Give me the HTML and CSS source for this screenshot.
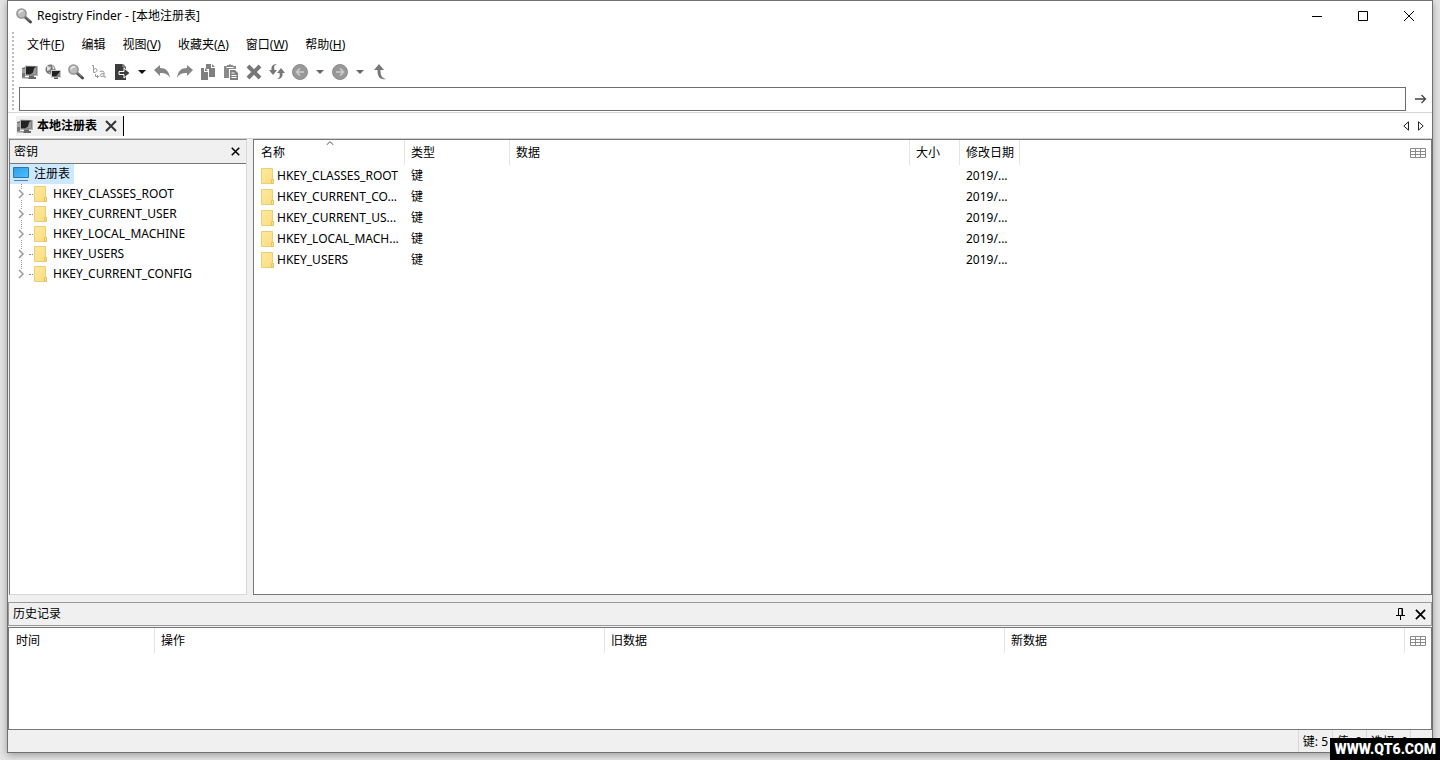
FILE: index.html
```html
<!DOCTYPE html>
<html lang="zh-CN">
<head>
<meta charset="utf-8">
<title>Registry Finder - [本地注册表]</title>
<link rel="stylesheet" href="styles.css">
</head>
<body>
<svg class="defs" aria-hidden="true">
  <defs>
    <linearGradient id="folder-fill" x1="0" y1="0" x2="1" y2="1"><stop offset="0" stop-color="#ffe9a0"/><stop offset="1" stop-color="#f9dc7c"/></linearGradient>
    <linearGradient id="screen-fill" x1="0" y1="0" x2="1" y2="1"><stop offset="0" stop-color="#2f9bea"/><stop offset="1" stop-color="#4fc0fb"/></linearGradient>
    <linearGradient id="mono-fill" x1="0" y1="0" x2="1" y2="1"><stop offset="0" stop-color="#111"/><stop offset=".5" stop-color="#333"/><stop offset="1" stop-color="#999"/></linearGradient>
    <symbol id="i-folder" viewBox="0 0 14 16"><path d="M.5.5h11v11h1v4H.5z" fill="url(#folder-fill)" stroke="#e9cf78"/><path d="M10.500 15.500v-4h2v4z" fill="#fbe08a" stroke="#e3c565"/></symbol>
    <symbol id="i-pc" viewBox="0 0 16 16"><path d="M0 4l3-1v11H0z" fill="#777"/><path d="M0 6h3M0 8h3" stroke="#ccc"/><path d="M3 1.500l13 .5v10H3z" fill="#b5b5b5"/><path d="M4 2.500h10.500v8H4z" fill="#222"/><path d="M8 10.500l3-2 1-4 2.500-2v8z" fill="#999"/><path d="M7 11.500h5v1.500h2v2H6v-2h1z" fill="#666"/><path d="M0 13h7v1.500H0z" fill="#999"/></symbol>
    <symbol id="i-lens" viewBox="0 0 16 16"><path d="M9 9l5.500 5" stroke="#444" stroke-width="2.800" stroke-linecap="round"/><path d="M9 8.500l4.500 4.200" stroke="#999"/><circle cx="5.500" cy="5.500" r="4.600" fill="#bcbcbc" stroke="#8d8d8d" stroke-width="1.400"/><path d="M3 5.500A3 3 0 0 1 7 3" stroke="#eee" stroke-width="1.500" fill="none"/></symbol>
    <symbol id="i-caret" viewBox="0 0 8 4"><path d="M0 0h8L4 4z" fill="currentColor"/></symbol>
    <symbol id="i-x" viewBox="0 0 12 12"><path d="M1 1l10 10M11 1L1 11" fill="none" stroke="currentColor"/></symbol>
    <symbol id="i-grid" viewBox="0 0 16 10"><path d="M.5.5h15v9H.5zM.5 3.500h15M.5 6.500h15M5.500.5v9M10.500.5v9" fill="none" stroke="#8a8a8a"/></symbol>
    <symbol id="i-expand" viewBox="0 0 6 10"><path d="M1 1l4 4-4 4" fill="none" stroke="#999" stroke-width="1.500"/></symbol>
  </defs>
</svg>
<div class="window">
  <header class="titlebar">
    <svg class="icon"><use href="#i-lens"/></svg>
    <h1 class="title">Registry Finder - [本地注册表]</h1>
    <button class="caption" aria-label="最小化"><svg width="10" height="10"><path d="M0 5.500h10" stroke="#000"/></svg></button>
    <button class="caption" aria-label="最大化"><svg width="10" height="10"><path d="M.5.5h9v9h-9z" stroke="#000" fill="none"/></svg></button>
    <button class="caption" aria-label="关闭"><svg width="12" height="12"><use href="#i-x"/></svg></button>
  </header>

  <div class="rebar">
    <nav class="menu">
      <button>文件(<u>F</u>)</button><button>编辑</button><button>视图(<u>V</u>)</button><button>收藏夹(<u>A</u>)</button><button>窗口(<u>W</u>)</button><button>帮助(<u>H</u>)</button>
    </nav>
    <div class="toolbar">
      <button aria-label="本地注册表"><svg class="icon"><use href="#i-pc"/></svg></button>
      <button aria-label="远程注册表"><svg class="icon" viewBox="0 0 16 16"><circle cx="5.500" cy="5.500" r="5" fill="#777"/><path d="M2 2l4 1-1 3-3 1zM7 1l3 3-2 2z" fill="#ddd"/><path d="M3 9l2-1 1 2z" fill="#bbb"/><path d="M6 6h10v7.500H6z" fill="#ccc"/><path d="M7 7h8v5.500H7z" fill="#222"/><path d="M11 12.500l4-5v5z" fill="#888"/><path d="M9 13.500h4V15H9z" fill="#555"/></svg></button>
      <button aria-label="查找"><svg class="icon"><use href="#i-lens"/></svg></button>
      <button aria-label="替换"><svg class="icon" viewBox="0 0 16 16" fill="none" stroke="#999"><path d="M1 1.500h1.500v7M2.500 5.500q3-2 3.500.5t-3.500 2.500M4.500 10v2.500h3M6 11l1.500 1.500L6 14"/><path d="M9 7.500q4-1.500 4 1v4.500h2M13 9.500q-4 0-4 2t4 .5"/></svg></button>
      <button aria-label="导出"><svg class="icon" viewBox="0 0 16 16"><path d="M1 0h8l3 3v13H1z" fill="#3c3c3c"/><path d="M9 0v3h3" stroke="#aaa" fill="none"/><path d="M5 7.500h5V4l6 5-6 5v-3.500H5z" fill="#3c3c3c" stroke="#fff"/></svg></button>
      <button class="drop" aria-label="导出选项"><svg class="caret"><use href="#i-caret"/></svg></button>
      <button aria-label="撤销"><svg class="icon" viewBox="0 0 16 16"><path d="M0 6l6-5v3c6 0 9 3 10 10-2-4-5-5-10-5v3z" fill="#858585"/></svg></button>
      <button aria-label="重做"><svg class="icon" viewBox="0 0 16 16"><path d="M16 6l-6-5v3C4 4 1 7 0 14c2-4 5-5 10-5v3z" fill="#858585"/></svg></button>
      <button aria-label="复制"><svg class="icon" viewBox="0 0 16 16" fill="#808080"><path d="M6 0h5v4h4v9H9V5H6z"/><path d="M12 0l3 3h-3zM1 4h3v4h4v8H1zM5 4l3 3H5z"/></svg></button>
      <button aria-label="粘贴"><svg class="icon" viewBox="0 0 16 16"><path d="M1 2h3V1h2q1-2 2 0h2v1h3v3H6v9H1z" fill="#8a8a8a"/><path d="M3.500 3.500h7" stroke="#fff"/><path d="M7 6h5l3 3v7H7z" fill="#808080"/><path d="M8.500 9h3M8.500 11.500h5M8.500 13.500h5" stroke="#fff"/></svg></button>
      <button aria-label="删除"><svg class="icon" viewBox="0 0 16 16"><path d="M2 2l12 12M14 2L2 14" stroke="#777" stroke-width="4"/></svg></button>
      <button aria-label="刷新"><svg class="icon" viewBox="0 0 16 16"><path d="M8 0C5 1 5 3 5.500 6H8l-4 5-4-5h2.500C2 2 4 0 8 0zM8 15c3-1 3-3 2.500-6H8l4-5 4 5h-2.500c.5 4-1.500 6-5.500 6z" fill="#777"/></svg></button>
      <button aria-label="后退"><svg class="icon" viewBox="0 0 16 16"><circle cx="8" cy="8" r="7.500" fill="#999" stroke="#8a8a8a"/><path d="M12 8H5M8 4.500L4.500 8 8 11.500" stroke="#ccc" stroke-width="1.700" fill="none"/></svg></button>
      <button class="drop dim" aria-label="后退历史"><svg class="caret"><use href="#i-caret"/></svg></button>
      <button aria-label="前进"><svg class="icon" viewBox="0 0 16 16"><circle cx="8" cy="8" r="7.500" fill="#999" stroke="#8a8a8a"/><path d="M4 8h7M8 4.500L11.500 8 8 11.500" stroke="#ccc" stroke-width="1.700" fill="none"/></svg></button>
      <button class="drop dim" aria-label="前进历史"><svg class="caret"><use href="#i-caret"/></svg></button>
      <button aria-label="向上"><svg class="icon" viewBox="0 0 16 16"><path d="M7 0l5 6H8.500c0 5 1 8 5.500 9-6 1-8.500-2-8.500-9H2z" fill="#777"/></svg></button>
    </div>
    <div class="address">
      <input type="text" aria-label="地址">
      <button aria-label="转到"><svg width="12" height="10"><path d="M0 5h10.500M6.500 1l4 4-4 4" stroke="#444" stroke-width="1.300" fill="none"/></svg></button>
    </div>
  </div>

  <div class="tabs">
    <div class="tab">
      <svg class="icon"><use href="#i-pc"/></svg>
      <button class="tab-name">本地注册表</button>
      <button class="tab-close" aria-label="关闭标签"><svg width="12" height="12"><use href="#i-x"/></svg></button>
    </div>
    <div class="tab-scroll">
      <button aria-label="上一个"><svg width="6" height="10"><path d="M5.500.8v8.400L.8 5z" fill="none" stroke="#222"/></svg></button>
      <button aria-label="下一个"><svg width="6" height="10"><path d="M.5.8v8.400L5.200 5z" fill="none" stroke="#222"/></svg></button>
    </div>
  </div>

  <main class="panes">
    <section class="keys">
      <div class="pane-head"><h2>密钥</h2><button class="bold-x" aria-label="关闭密钥"><svg width="9" height="9"><use href="#i-x"/></svg></button></div>
      <div class="tree">
        <div class="root"><svg width="16" height="14"><path d="M.5.5h15v10H.5z" fill="url(#screen-fill)" stroke="#2878b8"/><path d="M1 13.500h14" stroke="#4b83ad"/></svg><span>注册表</span></div>
        <ul>
          <li><svg class="expand"><use href="#i-expand"/></svg><svg class="folder"><use href="#i-folder"/></svg>HKEY_CLASSES_ROOT</li>
          <li><svg class="expand"><use href="#i-expand"/></svg><svg class="folder"><use href="#i-folder"/></svg>HKEY_CURRENT_USER</li>
          <li><svg class="expand"><use href="#i-expand"/></svg><svg class="folder"><use href="#i-folder"/></svg>HKEY_LOCAL_MACHINE</li>
          <li><svg class="expand"><use href="#i-expand"/></svg><svg class="folder"><use href="#i-folder"/></svg>HKEY_USERS</li>
          <li><svg class="expand"><use href="#i-expand"/></svg><svg class="folder"><use href="#i-folder"/></svg>HKEY_CURRENT_CONFIG</li>
        </ul>
      </div>
    </section>
    <section class="values">
      <table>
        <colgroup><col class="c-name"><col class="c-type"><col class="c-data"><col class="c-size"><col class="c-date"><col></colgroup>
        <thead><tr><th class="sorted">名称<svg class="sort" viewBox="0 0 8 4"><path d="M.5 4L4 .7 7.500 4" fill="none" stroke="#555"/></svg></th><th>类型</th><th>数据</th><th>大小</th><th>修改日期</th><th class="cols"><button aria-label="选择列"><svg width="16" height="10"><use href="#i-grid"/></svg></button></th></tr></thead>
        <tbody>
          <tr><td><div class="key"><svg class="folder"><use href="#i-folder"/></svg><span>HKEY_CLASSES_ROOT</span></div></td><td>键</td><td></td><td></td><td>2019/...</td><td></td></tr>
          <tr><td><div class="key"><svg class="folder"><use href="#i-folder"/></svg><span>HKEY_CURRENT_CO...</span></div></td><td>键</td><td></td><td></td><td>2019/...</td><td></td></tr>
          <tr><td><div class="key"><svg class="folder"><use href="#i-folder"/></svg><span>HKEY_CURRENT_US...</span></div></td><td>键</td><td></td><td></td><td>2019/...</td><td></td></tr>
          <tr><td><div class="key"><svg class="folder"><use href="#i-folder"/></svg><span>HKEY_LOCAL_MACH...</span></div></td><td>键</td><td></td><td></td><td>2019/...</td><td></td></tr>
          <tr><td><div class="key"><svg class="folder"><use href="#i-folder"/></svg><span>HKEY_USERS</span></div></td><td>键</td><td></td><td></td><td>2019/...</td><td></td></tr>
        </tbody>
      </table>
    </section>
  </main>

  <section class="history">
    <div class="history-head"><h2>历史记录</h2>
      <button aria-label="固定"><svg width="9" height="12"><path d="M2.500 7V.5h4V7M0 7.500h9M4.500 7.500V12" fill="none" stroke="#000"/><path d="M6 1v6" stroke="#000"/></svg></button>
      <button class="bold-x" aria-label="关闭历史记录"><svg width="11" height="11"><use href="#i-x"/></svg></button></div>
    <div class="log">
      <table>
        <colgroup><col class="c-time"><col class="c-action"><col class="c-old"><col><col class="c-pick"></colgroup>
        <thead><tr><th>时间</th><th>操作</th><th>旧数据</th><th>新数据</th><th class="cols"><button aria-label="选择列"><svg width="16" height="10"><use href="#i-grid"/></svg></button></th></tr></thead>
      </table>
    </div>
  </section>

  <footer class="status"><span>键: 5</span><span>值: 0</span><span>选择: 0</span><span class="grip"></span></footer>
</div>
<div class="watermark">WWW.QT6.COM</div>
</body>
</html>
```

FILE: styles.css
```css
* { box-sizing: border-box; }
body {
  margin: 0;
  padding: 0 7px 7px;
  min-height: 100vh;
  display: flex;
  background: #e6e6e6;
  color: #000;
  font: 12px/16px "Noto Sans", "Noto Sans CJK SC", sans-serif;
}
button {
  display: flex;
  align-items: center;
  justify-content: center;
  padding: 0;
  border: 0;
  background: none;
  color: inherit;
  font: inherit;
}
svg { display: block; flex: none; }
h1, h2 { margin: 0; font: inherit; }
.defs { position: absolute; width: 0; height: 0; }
.icon { width: 16px; height: 16px; }
.folder { width: 14px; height: 16px; }

.window {
  flex: 1;
  min-width: 0;
  display: flex;
  flex-direction: column;
  border: 1px solid #707070;
  background: #f0f0f0;
  box-shadow: 0 2px 8px #999;
}
.titlebar { display: flex; align-items: center; height: 29px; padding-left: 8px; background: #fff; }
.title { flex: 1; padding-left: 5px; }
.caption { width: 46px; height: 29px; }

.rebar { position: relative; padding: 4px 0 1px 11px; background: #fff; border-bottom: 1px solid #d8d8d8; }
.rebar::before {
  content: "";
  position: absolute;
  top: 2px;
  bottom: 0;
  left: 4px;
  width: 2px;
  background: repeating-linear-gradient(#bbb 0 2px, #fff 2px 4px);
}
.menu { display: flex; gap: 1px; height: 22px; }
.menu button { padding: 0 8px; white-space: nowrap; }
.menu u { text-underline-offset: 1px; }
.toolbar { display: flex; height: 31px; align-items: center; margin-left: -1px; }
.toolbar button { width: 23px; height: 24px; }
.toolbar .drop { width: 17px; color: #111; }
.toolbar .dim { color: #666; }
.caret { width: 8px; height: 4px; }
.address { display: flex; height: 24px; }
.address input { flex: 1; min-width: 0; padding: 0 4px; border: 1px solid #6e6e6e; background: #fff; font: inherit; outline: 0; }
.address button { width: 26px; padding-left: 4px; }

.tabs { display: flex; justify-content: space-between; height: 26px; padding: 3px 6px 2px 8px; background: #fff; border-bottom: 1px solid #d0d0d0; }
.tab { display: flex; align-items: center; padding: 0 6px 0 1px; background: #f0f0f0; border-right: 1px solid #000; }
.tab-name { padding: 0 8px 0 4px; font-weight: 700; }
.tab-close { color: #333; stroke-width: 2px; }
.tab-scroll { display: flex; gap: 4px; }
.tab-scroll button { width: 11px; }

.panes { flex: 1; min-height: 0; display: flex; gap: 6px; padding: 0 0 7px 1px; }
.keys { width: 238px; display: flex; flex-direction: column; border: 1px solid #d8d8d8; border-top-color: #888; border-left-color: #777; background: #fff; }
.pane-head, .history-head { display: flex; align-items: center; justify-content: space-between; background: #f0f0f0; }
.pane-head { height: 24px; padding: 0 6px 0 4px; border-bottom: 1px solid #777; }
.bold-x { stroke-width: 2px; }
.root { display: flex; width: fit-content; align-items: center; gap: 5px; height: 20px; padding: 0 4px 0 3px; background: #cce8ff; }
.tree ul { position: relative; margin: 0; padding: 0; list-style: none; }
.tree ul::before { content: ""; position: absolute; top: 0; bottom: 9px; left: 11px; border-left: 1px dotted #999; }
.tree li { position: relative; display: flex; align-items: center; height: 20px; padding-left: 6px; }
.expand { width: 10px; height: 10px; background: #fff; margin-right: 8px; }
.tree li::before { content: ""; position: absolute; left: 19px; width: 4px; border-top: 1px dotted #888; }
.tree .folder { margin-right: 5px; }
.values { flex: 1; min-width: 0; border: 1px solid #777; background: #fff; }

table { width: 100%; table-layout: fixed; border-collapse: separate; border-spacing: 0; }
th, td { padding: 0 0 0 6px; text-align: left; font-weight: 400; white-space: nowrap; }
th:first-child, td:first-child { padding-left: 7px; }
th { height: 25px; border-right: 1px solid #e5e5e5; }
td { height: 21px; }
.sorted { position: relative; }
.sort { position: absolute; top: 1px; left: 72px; width: 8px; height: 4px; }
.key { display: flex; align-items: center; gap: 2px; overflow: hidden; }
.cols { padding: 0 5px 0 0; border-right: 0; }
.cols button { margin-left: auto; }
.c-name { width: 151px; }
.c-type { width: 105px; }
.c-data, .c-old { width: 400px; }
.c-size { width: 50px; }
.c-date { width: 60px; }
.c-time { width: 146px; }
.c-action { width: 450px; }
.c-pick { width: 26px; }

.history-head { height: 24px; padding: 0 5px 0 4px; border: 1px solid #999; gap: 10px; }
.history-head h2 { flex: 1; }
.log { height: 103px; margin-top: 1px; border: 1px solid #777; background: #fff; }

.status { display: flex; justify-content: flex-end; height: 22px; }
.status span { padding: 4px 2px 0 4px; border-left: 1px solid #d8d8d8; min-width: 34px; white-space: nowrap; }
.status .grip { min-width: 22px; }

.watermark {
  position: fixed;
  right: 0;
  bottom: 0;
  padding: 3px 4px;
  background: #000;
  color: #fff;
  font: 900 14px/16px Roboto, "Liberation Sans", sans-serif;
}
```
